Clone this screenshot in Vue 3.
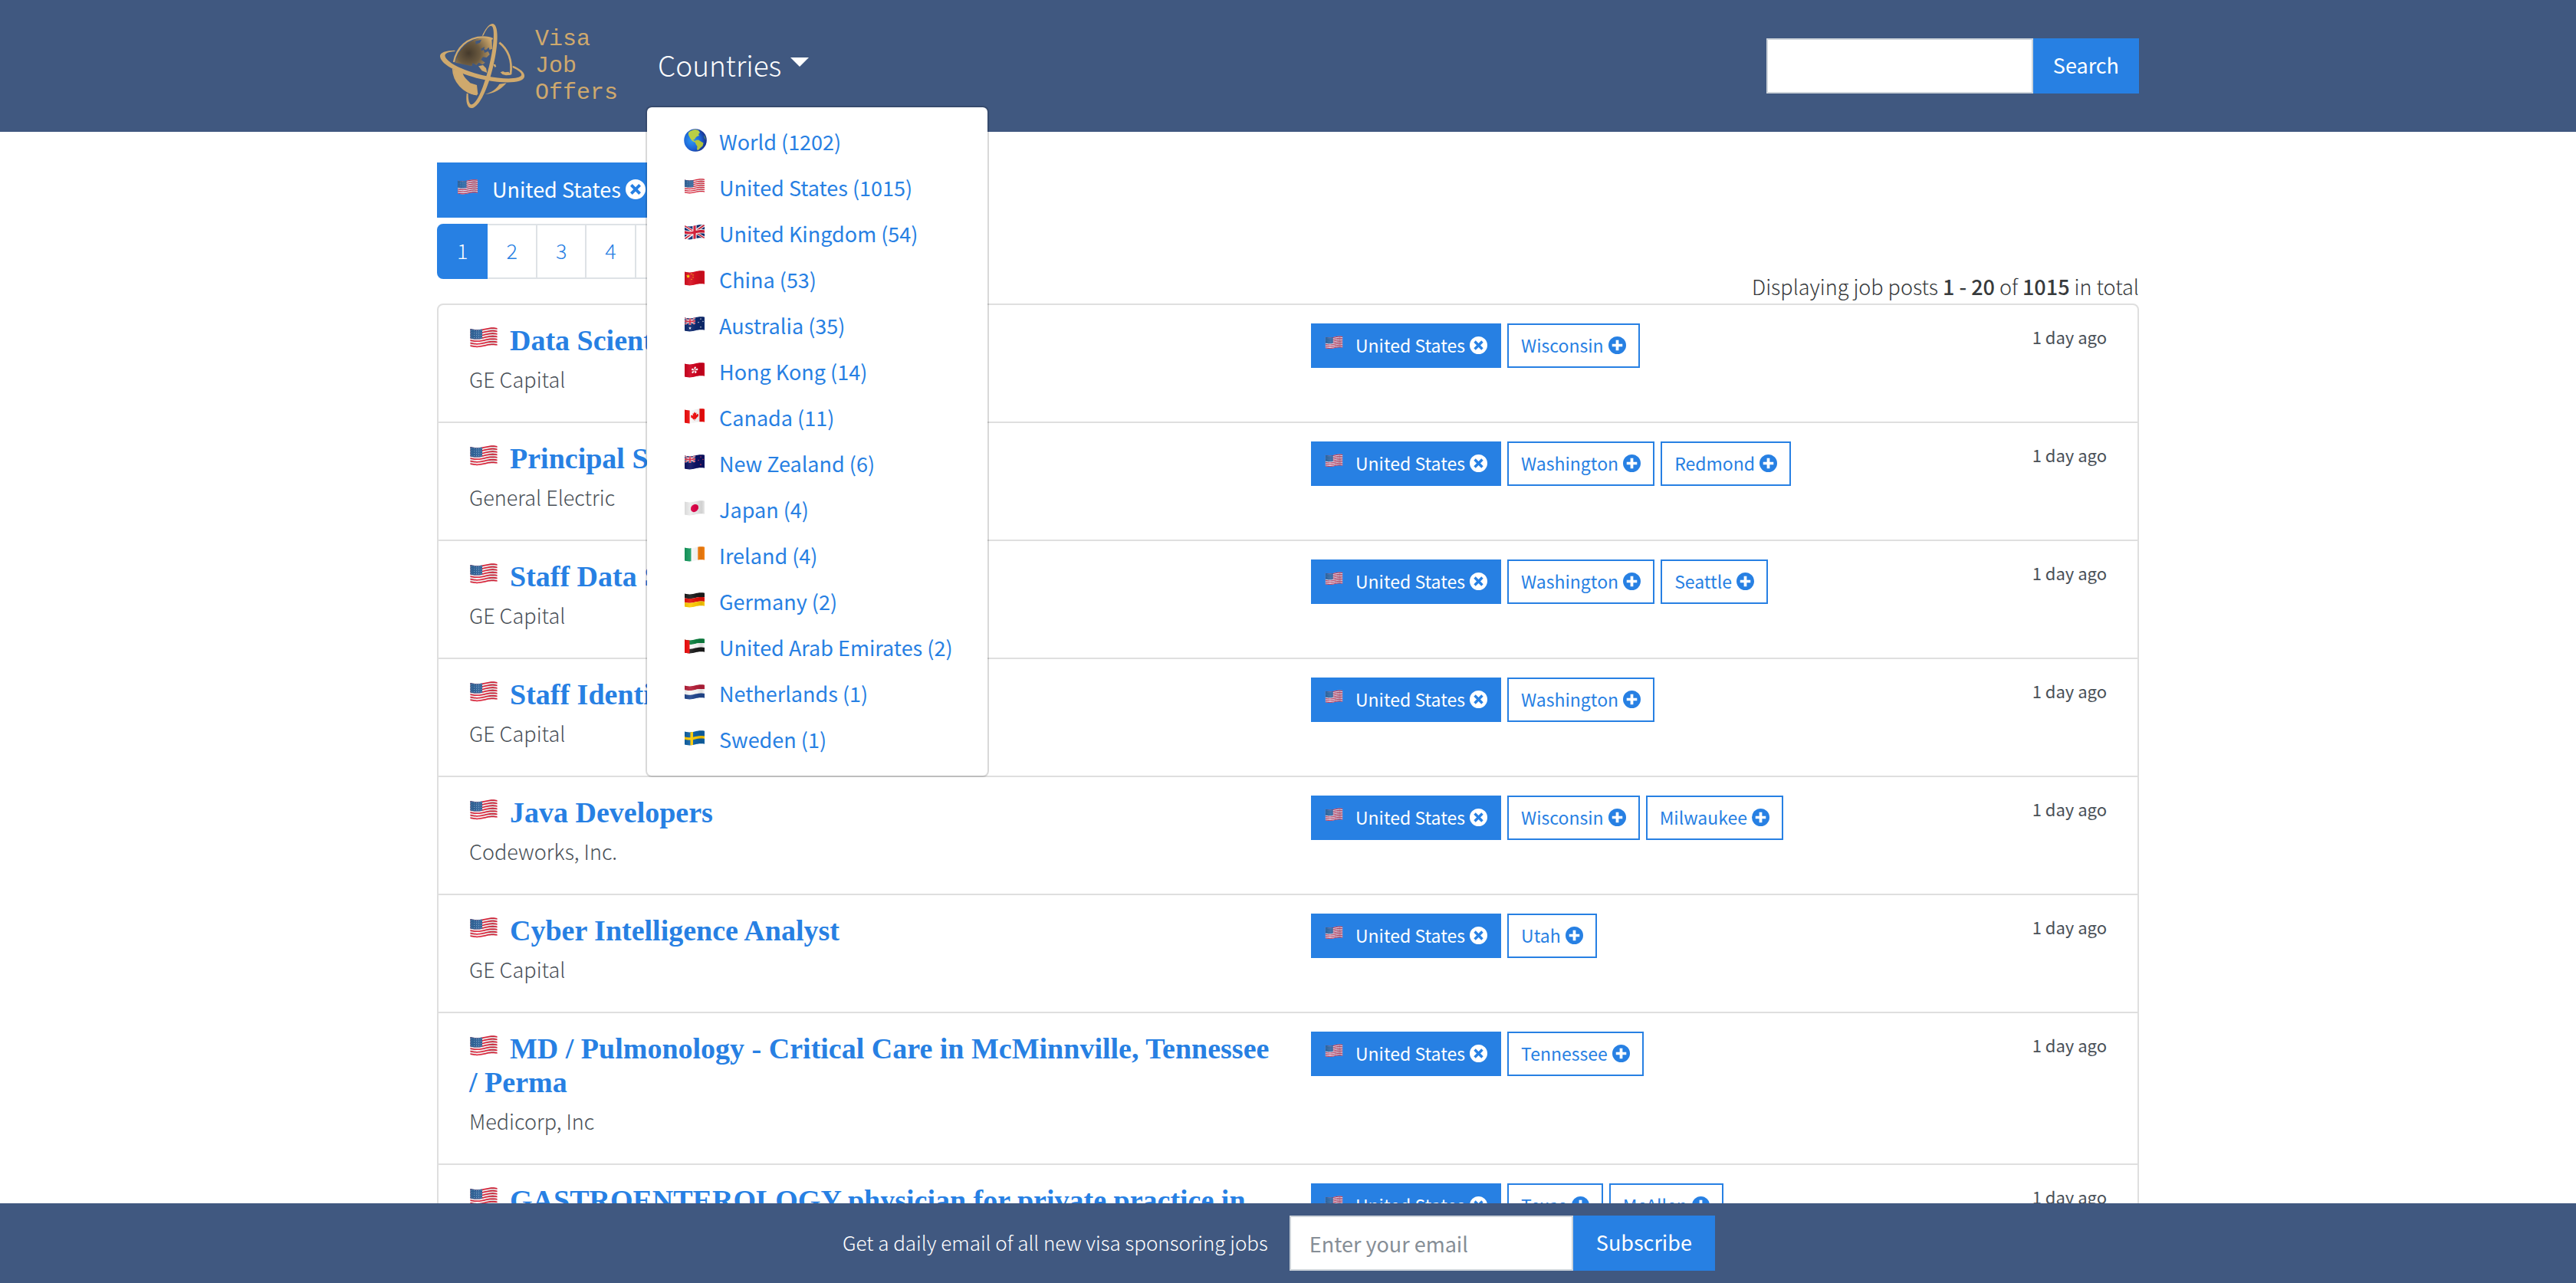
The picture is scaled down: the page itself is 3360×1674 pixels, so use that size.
<script setup>
    import { ref } from "vue";

    const menuOpen = ref(true);
    const query = ref("");
    const email = ref("");

    const pages = [1, 2, 3, 4, 5];

    const countries = [
        { code: "world", name: "World", count: 1202 },
        { code: "us", name: "United States", count: 1015 },
        { code: "gb", name: "United Kingdom", count: 54 },
        { code: "cn", name: "China", count: 53 },
        { code: "au", name: "Australia", count: 35 },
        { code: "hk", name: "Hong Kong", count: 14 },
        { code: "ca", name: "Canada", count: 11 },
        { code: "nz", name: "New Zealand", count: 6 },
        { code: "jp", name: "Japan", count: 4 },
        { code: "ie", name: "Ireland", count: 4 },
        { code: "de", name: "Germany", count: 2 },
        { code: "ae", name: "United Arab Emirates", count: 2 },
        { code: "nl", name: "Netherlands", count: 1 },
        { code: "se", name: "Sweden", count: 1 },
    ];

    const jobs = [
        { title: "Data Scientist", company: "GE Capital", places: ["Wisconsin"] },
        { title: "Principal Software Engineer", company: "General Electric", places: ["Washington", "Redmond"] },
        { title: "Staff Data Scientist", company: "GE Capital", places: ["Washington", "Seattle"] },
        { title: "Staff Identity Engineer", company: "GE Capital", places: ["Washington"] },
        { title: "Java Developers", company: "Codeworks, Inc.", places: ["Wisconsin", "Milwaukee"] },
        { title: "Cyber Intelligence Analyst", company: "GE Capital", places: ["Utah"] },
        { title: "MD / Pulmonology - Critical Care in McMinnville, Tennessee /\u00a0Perma", company: "Medicorp, Inc", places: ["Tennessee"] },
        { title: "GASTROENTEROLOGY physician for private practice in", company: "Medicorp, Inc", places: ["Texas", "McAllen"] },
    ];

    // Flags are 26 x 17 and every shape follows the same wave
    const wave = (x) => 1.3 + 1.1 * Math.sin((2 * Math.PI * (x + 1)) / 30);
    const point = (x, y) => `${(x + 1).toFixed(2)},${(y + wave(x)).toFixed(2)}`;

    const poly = (points, fill) => ({ points: points.map(([x, y]) => point(x, y)).join(" "), fill });

    const rect = (x, y, w, h, fill) => {
        const steps = Math.max(1, Math.ceil(w));
        const top = [];
        const bottom = [];
        for (let i = 0; i <= steps; i++) {
            const px = x + (w * i) / steps;
            top.push([px, y]);
            bottom.unshift([px, y + h]);
        }
        return poly([...top, ...bottom], fill);
    };

    const star = (cx, cy, r, fill) => {
        const points = [];
        for (let i = 0; i < 10; i++) {
            const a = (Math.PI * i) / 5 - Math.PI / 2;
            const k = i % 2 ? r * 0.42 : r;
            points.push([cx + k * Math.cos(a), cy + k * Math.sin(a)]);
        }
        return poly(points, fill);
    };

    const disc = (cx, cy, r, fill) => {
        const points = [];
        for (let i = 0; i < 24; i++) {
            const a = (Math.PI * i) / 12;
            points.push([cx + r * Math.cos(a), cy + r * Math.sin(a)]);
        }
        return poly(points, fill);
    };

    const union = (w, h) => {
        const t = h * 0.13;
        return [
            rect(0, 0, w, h, "#0d2a70"),
            poly([[0, 0], [t * 1.6, 0], [w, h - t], [w, h], [w - t * 1.6, h], [0, t]], "#fff"),
            poly([[w, 0], [w - t * 1.6, 0], [0, h - t], [0, h], [t * 1.6, h], [w, t]], "#fff"),
            poly([[0, 0], [t * 0.7, 0], [w, h - t * 0.4], [w, h], [w - t * 0.7, h], [0, t * 0.4]], "#d8203a"),
            poly([[w, 0], [w - t * 0.7, 0], [0, h - t * 0.4], [0, h], [t * 0.7, h], [w, t * 0.4]], "#d8203a"),
            rect(w * 0.4, 0, w * 0.2, h, "#fff"),
            rect(0, h * 0.34, w, h * 0.32, "#fff"),
            rect(w * 0.44, 0, w * 0.12, h, "#d8203a"),
            rect(0, h * 0.4, w, h * 0.2, "#d8203a"),
        ];
    };

    const petals = () => {
        const list = [];
        for (let i = 0; i < 5; i++) {
            const a = (Math.PI * 2 * i) / 5 - Math.PI / 2 + 0.2;
            list.push(disc(13 + 3.1 * Math.cos(a), 8.5 + 3.1 * Math.sin(a), 1.3, "#fff"));
            list.push(disc(13 + 1.4 * Math.cos(a), 8.5 + 1.4 * Math.sin(a), 0.7, "#fff"));
        }
        return list;
    };

    const flags = {
        us: [
            rect(0, 0, 26, 17, "#fafafa"),
            ...[0, 2, 4, 6, 8, 10, 12].map((i) => rect(0, (i * 17) / 13, 26, 17 / 13, "#e0263c")),
            rect(0, 0, 11.5, (17 * 7) / 13, "#2a5f97"),
            ...[1.2, 3.4, 5.6, 7.8].flatMap((y) => [1.4, 3.7, 6, 8.3, 10.4].map((x) => disc(x, y, 0.35, "#a9c4dd"))),
        ],
        gb: union(26, 17),
        cn: [
            rect(0, 0, 26, 17, "#d80f20"),
            star(4.5, 5.2, 2.8, "#ffe000"),
            star(9, 2, 1, "#ffe000"),
            star(11, 4, 1, "#ffe000"),
            star(11, 7, 1, "#ffe000"),
            star(9, 9.2, 1, "#ffe000"),
        ],
        au: [
            rect(0, 0, 26, 17, "#0d2a70"),
            ...union(14, 8.5),
            star(7, 12.7, 2, "#fff"),
            star(21, 3, 1.1, "#fff"),
            star(18, 7, 1.1, "#fff"),
            star(24, 6, 1.1, "#fff"),
            star(21, 13.6, 1.2, "#fff"),
        ],
        hk: [rect(0, 0, 26, 17, "#d0021f"), ...petals()],
        ca: [
            rect(0, 0, 26, 17, "#fafafa"),
            rect(0, 0, 6.6, 17, "#f20d0d"),
            rect(19.4, 0, 6.6, 17, "#f20d0d"),
            poly([
                [13, 2.8], [14.2, 4.9], [15.5, 4.3], [15, 7.6], [16.6, 6.2], [18.1, 7], [17.6, 8.5], [18.2, 9], [15, 11.6], [15.2, 12.5],
                [13.3, 12.2], [13.3, 14.2], [12.7, 14.2], [12.7, 12.2], [10.8, 12.5], [11, 11.6], [7.8, 9], [8.4, 8.5], [7.9, 7], [9.4, 6.2],
                [11, 7.6], [10.5, 4.3], [11.8, 4.9],
            ], "#f20d0d"),
        ],
        nz: [
            rect(0, 0, 26, 17, "#0c1264"),
            ...union(14, 8.5),
            star(21, 3, 1.1, "#e8436a"),
            star(18, 7, 1.1, "#e8436a"),
            star(24, 6, 1.1, "#e8436a"),
            star(21, 13, 1.3, "#e8436a"),
        ],
        jp: [rect(0, 0, 26, 17, "#ececec"), disc(13, 8.5, 5, "#dc0046")],
        ie: [rect(0, 0, 8.7, 17, "#159a5e"), rect(8.7, 0, 8.6, 17, "#fafafa"), rect(17.3, 0, 8.7, 17, "#fb8310")],
        de: [rect(0, 0, 26, 5.7, "#1c1c1c"), rect(0, 5.7, 26, 5.6, "#e3120b"), rect(0, 11.3, 26, 5.7, "#ffcb05")],
        ae: [
            rect(0, 0, 26, 5.7, "#0c8040"),
            rect(0, 5.7, 26, 5.6, "#fafafa"),
            rect(0, 11.3, 26, 5.7, "#1c1c1c"),
            rect(0, 0, 6.5, 17, "#f20d0d"),
        ],
        nl: [rect(0, 0, 26, 5.7, "#b5203a"), rect(0, 5.7, 26, 5.6, "#fafafa"), rect(0, 11.3, 26, 5.7, "#23488f")],
        se: [rect(0, 0, 26, 17, "#0f62a6"), rect(7.5, 0, 3.5, 17, "#fecb00"), rect(0, 6.8, 26, 3.4, "#fecb00")],
    };
    const shade = rect(0, 0, 26, 17);
</script>

<template>
    <div class="page">
        <svg class="defs" width="0" height="0" aria-hidden="true">
            <defs>
                <linearGradient id="flagShade">
                    <stop offset="0" stop-color="#000" stop-opacity="0.08" />
                    <stop offset="0.3" stop-color="#fff" stop-opacity="0.08" />
                    <stop offset="0.6" stop-color="#000" stop-opacity="0.04" />
                    <stop offset="0.85" stop-color="#000" stop-opacity="0.12" />
                    <stop offset="1" stop-color="#000" stop-opacity="0.02" />
                </linearGradient>
                <radialGradient id="sea" cx="0.35" cy="0.5" r="0.65">
                    <stop offset="0" stop-color="#2f9af5" />
                    <stop offset="0.6" stop-color="#1c62d4" />
                    <stop offset="1" stop-color="#172c86" />
                </radialGradient>
                <radialGradient id="shadow" gradientUnits="userSpaceOnUse" cx="124" cy="145" r="100">
                    <stop offset="0" stop-color="#453a2c" />
                    <stop offset="0.45" stop-color="#6b5a40" />
                    <stop offset="1" stop-color="#cfa96d" />
                </radialGradient>
                <symbol v-for="(shapes, code) in flags" :id="'flag-' + code" :key="code" viewBox="0 0 28 20">
                    <polygon v-for="(shape, i) in shapes" :key="i" :points="shape.points" :fill="shape.fill" />
                    <polygon :points="shade.points" fill="url(#flagShade)" />
                </symbol>
                <symbol id="flag-world" viewBox="0 0 30 30">
                    <circle cx="15" cy="15" r="14.8" fill="url(#sea)" />
                    <path d="M6 5C8 3 11 1.500 15 1l4 1 2 3-2 2 1 2-3 1-2 2-1 2-2 0 2 2 2 1-1 1-4-2-3-4-2-4z" fill="#b9cf45" />
                    <path d="M15 15l4-.5 3 2 3.500 2-1 4-3 2.500-3 3-1.500-1 .5-4-2-3-1-3z" fill="#b3c53c" />
                    <path d="M26 8l2 3 .6 4-1.800-3z" fill="#5d9a5a" />
                </symbol>
                <symbol id="icon-times" viewBox="0 0 16 16">
                    <path fill="currentColor" fill-rule="evenodd" d="M8 0a8 8 0 1 0 0 16A8 8 0 0 0 8 0zM5.400 3.700 8 6.300l2.600-2.600 1.700 1.700L9.700 8l2.600 2.600-1.700 1.700L8 9.700l-2.600 2.600-1.700-1.700L6.300 8 3.700 5.400z" />
                </symbol>
                <symbol id="icon-plus" viewBox="0 0 16 16">
                    <path fill="currentColor" fill-rule="evenodd" d="M8 0a8 8 0 1 0 0 16A8 8 0 0 0 8 0zM6.700 3.300h2.600v3.400h3.400v2.600H9.300v3.400H6.700V9.300H3.300V6.700h3.400z" />
                </symbol>
            </defs>
        </svg>

        <header class="navbar">
            <div class="container navbar-inner">
                <a class="brand" href="#">
                    <svg class="brand-mark" viewBox="9 27 339 339" aria-hidden="true">
                        <path d="M72 182C82 130 122 92 180 84c14-1 26 0 34 4l2 40-10 4-4-10-10 10-10-2 4 14 14-6 6 12-12 12-14-2-8 10 16 12-10 8-14-8-10 10-14-8-4 12z" fill="url(#shadow)" />
                        <path d="M150 98l24-6-6 12-16 6zM172 128l14-8-2 12-10 4z" fill="#405880" />
                        <path d="M64 208l36 12c4 22 20 30 30 42l26 8 4 36-6 4C104 302 66 258 64 208z" fill="#cfa96d" />
                        <path d="M162 196l18-4 12 12 4 18-20-8zM220 190l8-2 4 10-6 2zM248 220l10-4 8 4 14-2 10 12-20 2-14-4z" fill="#cfa96d" />
                        <g fill="none" stroke="#cfa96d">
                            <path d="M66 180C76 124 120 82 180 82c14 0 28 2 38 8" stroke-width="7" />
                            <path d="M244 104c34 26 52 70 44 124" stroke-width="8" />
                            <path d="M62 206c2 50 40 94 94 102" stroke-width="5" />
                        </g>
                        <path d="M188 306c34-2 62-18 84-44l-28 4c-12 20-30 32-56 40z" fill="#cfa96d" />
                        <path d="M70 134C36 134 10 142 12 158c4 34 84 72 176 92 82 16 148 12 154-12 4-16-18-34-46-44l0 8c22 10 38 22 34 30-8 16-72 16-140 2C114 218 40 184 32 158c-4-12 12-18 38-20z" fill="#cfa96d" />
                        <path d="M176 78c12-26 26-46 40-48 26-2 26 76 4 166-20 86-54 160-82 164-20 2-26-24-22-58l6 2c0 24 4 44 14 42 22-4 48-72 68-150 20-82 24-156 8-158-10 0-20 14-30 38z" fill="#cfa96d" />
                    </svg>
                    <span class="brand-text">
                        <span>Visa</span>
                        <span>Job</span>
                        <span>Offers</span>
                    </span>
                </a>
                <div class="dropdown">
                    <button class="dropdown-toggle" type="button" :aria-expanded="menuOpen" @click="menuOpen = !menuOpen">
                        Countries
                        <span class="caret"></span>
                    </button>
                    <div v-if="menuOpen" class="dropdown-menu">
                        <a v-for="country in countries" :key="country.code" class="dropdown-item" href="#">
                            <svg :class="country.code === 'world' ? 'globe' : 'flag'" aria-hidden="true"><use :href="'#flag-' + country.code" /></svg>
                            <span>{{ country.name }} ({{ country.count }})</span>
                        </a>
                    </div>
                </div>
                <form class="input-group" @submit.prevent>
                    <input v-model="query" class="search-input" type="text" aria-label="Search jobs" />
                    <button class="btn" type="submit">Search</button>
                </form>
            </div>
        </header>

        <main class="content">
            <div class="container">
                <div class="toolbar">
                    <div class="filters">
                        <a class="tag tag-active tag-large" href="#">
                            <svg class="flag" aria-hidden="true"><use href="#flag-us" /></svg>
                            <span>United States</span>
                            <svg class="icon" aria-hidden="true"><use href="#icon-times" /></svg>
                        </a>
                        <nav class="pagination" aria-label="Pages">
                            <a v-for="page in pages" :key="page" class="page-link" :class="{ active: page === 1 }" href="#">{{ page }}</a>
                        </nav>
                    </div>
                    <p class="summary">Displaying job posts <b>1 - 20</b> of <b>1015</b> in total</p>
                </div>

                <ul class="jobs">
                    <li v-for="job in jobs" :key="job.title" class="job">
                        <div>
                            <h5 class="job-title">
                                <a href="#"><svg class="flag" aria-hidden="true"><use href="#flag-us" /></svg>{{ job.title }}</a>
                            </h5>
                            <p class="company">{{ job.company }}</p>
                        </div>
                        <div class="job-side">
                            <div class="tags">
                                <a class="tag tag-active" href="#">
                                    <svg class="flag" aria-hidden="true"><use href="#flag-us" /></svg>
                                    <span>United States</span>
                                    <svg class="icon" aria-hidden="true"><use href="#icon-times" /></svg>
                                </a>
                                <a v-for="place in job.places" :key="place" class="tag" href="#">
                                    <span>{{ place }}</span>
                                    <svg class="icon" aria-hidden="true"><use href="#icon-plus" /></svg>
                                </a>
                            </div>
                            <small class="age">1 day ago</small>
                        </div>
                    </li>
                </ul>
            </div>
        </main>

        <footer class="subscribe">
            <label for="email">Get a daily email of all new visa sponsoring jobs</label>
            <form class="input-group" @submit.prevent>
                <input id="email" v-model="email" class="email-input" type="email" placeholder="Enter your email" />
                <button class="btn btn-wide" type="submit">Subscribe</button>
            </form>
        </footer>
    </div>
</template>

<style>
    body {
        margin: 0;
        background-color: #fff;
    }
</style>

<style scoped>
    .page {
        display: flex;
        flex-direction: column;
        height: 100vh;
        font-family: "Noto Sans CJK SC", "Open Sans", sans-serif;
        font-size: 27px;
        font-weight: 300;
        line-height: 44px;
        color: #373a3c;
    }

    .page *,
    .page *::before {
        box-sizing: border-box;
    }

    .defs {
        position: absolute;
    }

    a {
        color: #2780e3;
        text-decoration: none;
    }

    .container {
        width: 100%;
        max-width: 2280px;
        margin: 0 auto;
        padding: 0 30px;
    }

    .navbar {
        position: relative;
        z-index: 10;
        flex: none;
        background-color: #405880;
    }

    .navbar-inner {
        display: flex;
        align-items: center;
        height: 172px;
    }

    .brand {
        display: flex;
        align-items: center;
        gap: 12px;
        padding-left: 3px;
        color: #cfa96d;
    }

    .brand-mark {
        width: 113px;
        height: 113px;
    }

    .brand-text {
        display: flex;
        flex-direction: column;
        width: 144px;
        font-family: "Liberation Mono", monospace;
        font-size: 30px;
        font-weight: 400;
        line-height: 35px;
    }

    .dropdown {
        position: relative;
        flex: 1;
    }

    .dropdown-toggle {
        display: flex;
        align-items: center;
        gap: 12px;
        padding: 14px 16px 18px;
        border: 0;
        background: none;
        font: inherit;
        font-size: 37px;
        line-height: 72px;
        color: #fff;
        cursor: pointer;
    }

    .caret {
        margin-bottom: 6px;
        border-top: 12px solid #fff;
        border-left: 12px solid transparent;
        border-right: 12px solid transparent;
    }

    .dropdown-menu {
        position: absolute;
        top: 100%;
        left: 0;
        padding: 16px 0;
        border: 2px solid rgba(0, 0, 0, 0.15);
        border-radius: 8px;
        background-color: #fff;
        background-clip: padding-box;
    }

    .dropdown-item {
        display: flex;
        align-items: center;
        padding: 7px 45px 9px 48px;
        font-weight: 400;
        white-space: nowrap;
    }

    .flag {
        width: 28px;
        height: 20px;
    }

    .dropdown-item .flag {
        margin: 0 18px 4px 0;
    }

    .globe {
        width: 30px;
        height: 30px;
        margin: 0 16px 4px 0;
    }

    .input-group {
        display: flex;
    }

    .input-group input {
        height: 72px;
        padding: 12px 24px;
        border: 2px solid #ced4da;
        border-radius: 0;
        background-color: #fff;
        font: inherit;
        font-weight: 400;
        color: #495057;
    }

    .input-group input::placeholder {
        color: #868e96;
        opacity: 1;
    }

    .search-input {
        width: 348px;
    }

    .email-input {
        width: 370px;
    }

    .btn {
        height: 72px;
        padding: 11px 24px 13px;
        border: 2px solid #2780e3;
        background-color: #2780e3;
        font: inherit;
        font-weight: 400;
        color: #fff;
        cursor: pointer;
    }

    .btn-wide {
        padding: 11px 28px 13px;
    }

    .content {
        flex: 1;
        min-height: 0;
        overflow-y: auto;
        scrollbar-width: none;
    }

    .toolbar {
        display: flex;
        justify-content: space-between;
        align-items: flex-end;
        padding-top: 40px;
    }

    .filters {
        display: flex;
        flex-direction: column;
        align-items: flex-start;
        gap: 8px;
        margin-bottom: 32px;
    }

    .tag {
        display: flex;
        align-items: center;
        gap: 6px;
        padding: 0 16px 2px;
        border: 2px solid #2780e3;
        font-size: 23px;
        font-weight: 400;
        line-height: 52px;
        white-space: nowrap;
    }

    .tag .flag {
        width: 24px;
        height: 18px;
        margin: 0 10px 6px 0;
        opacity: 0.85;
    }

    .tag .icon {
        width: 23px;
        height: 23px;
    }

    .tag-active {
        background-color: #2780e3;
        color: #fff;
    }

    .tag-large {
        padding: 0 24px 2px;
        font-size: 27px;
        line-height: 66px;
    }

    .tag-large .flag {
        width: 28px;
        height: 20px;
        margin-right: 12px;
    }

    .tag-large .icon {
        width: 26px;
        height: 26px;
    }

    .pagination {
        display: flex;
    }

    .page-link {
        min-width: 66px;
        margin-left: -2px;
        padding: 11px 24px 13px;
        border: 2px solid #dee2e6;
        text-align: center;
    }

    .page-link:first-child {
        margin-left: 0;
        border-radius: 8px 0 0 8px;
    }

    .page-link.active {
        z-index: 1;
        border-color: #2780e3;
        background-color: #2780e3;
        color: #fff;
    }

    .summary {
        margin: 0;
    }

    .summary b {
        font-weight: 500;
    }

    .jobs {
        margin: 0;
        padding: 0;
        border: 2px solid #dfdfdf;
        border-radius: 8px;
        list-style: none;
    }

    .job {
        display: grid;
        grid-template-columns: 1fr 1fr;
        gap: 60px;
        padding: 24px 40px;
    }

    .job + .job {
        border-top: 2px solid #dfdfdf;
    }

    .job-title {
        margin: 0 -16px 7px 0;
        font-family: "Liberation Serif", serif;
        font-size: 38px;
        font-weight: 700;
        line-height: 44px;
    }

    .job-title .flag {
        width: 38px;
        height: 27px;
        margin-right: 15px;
        vertical-align: 3px;
    }

    .company {
        margin: 0 0 9px;
        color: #495057;
    }

    .job-side {
        display: flex;
        justify-content: space-between;
        align-items: flex-start;
    }

    .tags {
        display: flex;
        gap: 8px;
    }

    .age {
        font-size: 22px;
        font-weight: 400;
        line-height: 34px;
        color: #495057;
    }

    .subscribe {
        display: flex;
        flex: none;
        justify-content: center;
        align-items: center;
        gap: 28px;
        padding: 16px 24px 16px 0;
        background-color: #405880;
        color: #fff;
    }

    .subscribe label {
        padding-bottom: 2px;
        font-size: 26px;
    }
</style>
